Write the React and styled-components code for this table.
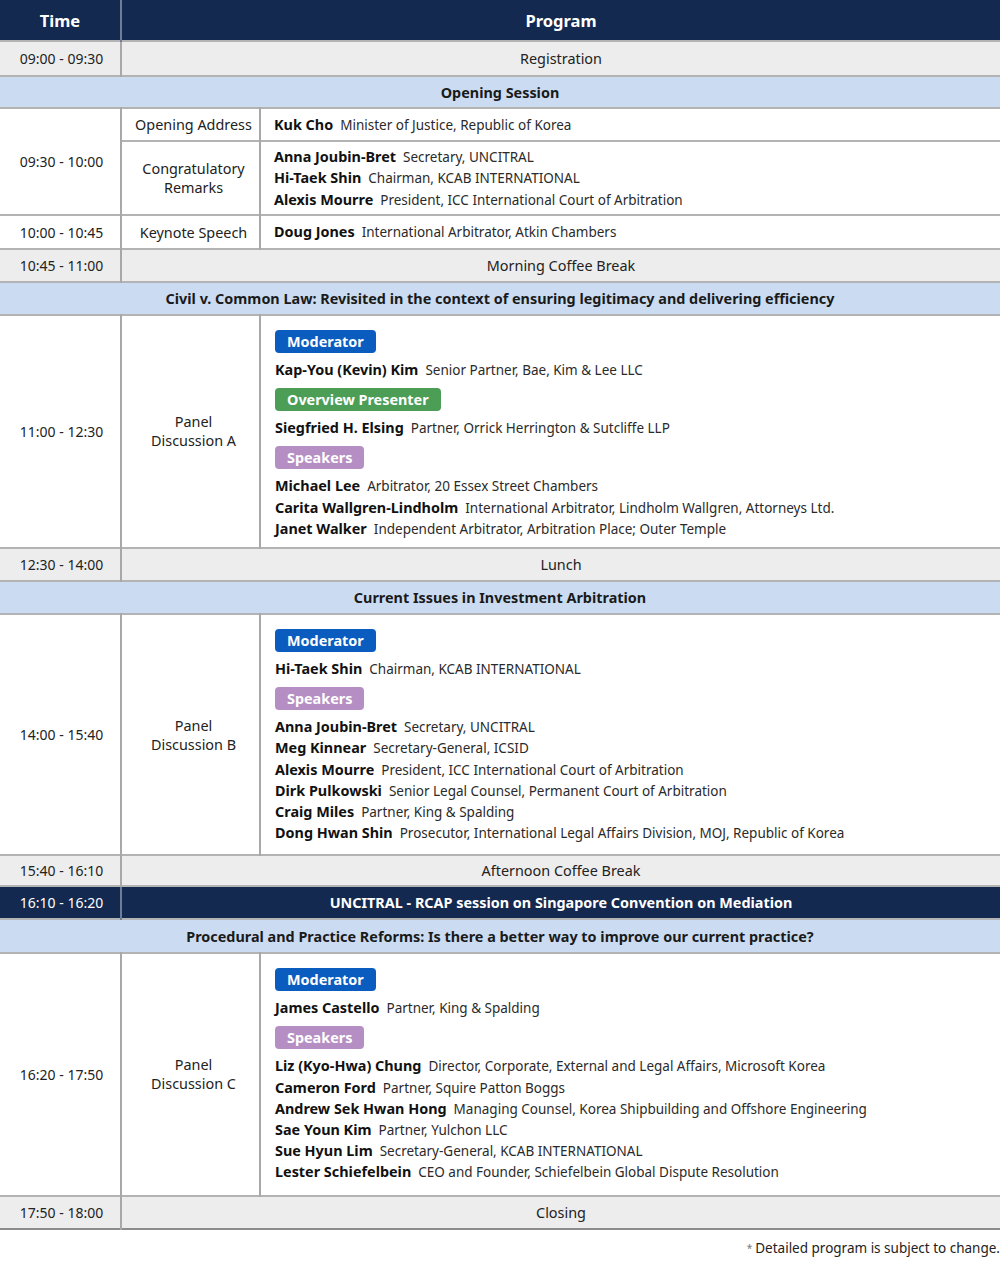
import React from 'react';
import styled, { createGlobalStyle } from 'styled-components';

const GlobalStyle = createGlobalStyle`
  body {
    margin: 0;
    background: #ffffff;
    font-family: "Noto Sans", "Open Sans", sans-serif;
    color: #222;
  }
`;

const Page = styled.div`
  width: 1000px;
`;

const Table = styled.table`
  width: 1000px;
  border-collapse: collapse;
  table-layout: fixed;
  font-size: 14.4px;
  line-height: 19px;
  border-bottom: 2px solid #8c8c8c;
`;

const HeadCell = styled.th`
  height: 40px;
  padding: 0;
  background: #13294f;
  color: #fff;
  font-size: 16.5px;
  font-weight: 700;
  text-align: center;
  border-left: ${p => (p.$first ? 'none' : '2px solid #6f7d96')};
`;

const Row = styled.tr`
  height: ${p => p.$h}px;
  border-top: 2px solid #b3b3b3;
`;

const TimeCell = styled.td`
  padding: 0 0 0 3px;
  font-size: 14px;
  text-align: center;
  vertical-align: middle;
  background: ${p => (p.$dark ? '#13294f' : p.$grey ? '#ededed' : '#fff')};
  color: ${p => (p.$dark ? '#fff' : '#222')};
`;

const RoleCell = styled.td`
  padding: 0 2px 0 8px;
  text-align: center;
  vertical-align: middle;
  line-height: 19px;
  border-left: 2px solid #a8a8a8;
`;

const SimpleCell = styled.td`
  padding: 0;
  text-align: center;
  vertical-align: middle;
  border-left: 2px solid ${p => (p.$dark ? '#6f7d96' : '#a8a8a8')};
  background: ${p => (p.$dark ? '#13294f' : '#ededed')};
  color: ${p => (p.$dark ? '#fff' : '#222')};
  font-weight: ${p => (p.$dark ? 700 : 400)};
`;

const SessionCell = styled.td`
  padding: 0;
  text-align: center;
  vertical-align: middle;
  background: #cbdcf2;
  font-weight: 700;
  color: #1a1a1a;
`;

const ContentCell = styled.td`
  padding: ${p => (p.$pb != null ? `14px 14px ${p.$pb}px 14px` : '3px 12px 3px 13px')};
  vertical-align: middle;
  border-left: 2px solid #a8a8a8;
`;

const Person = styled.div`
  height: 21.2px;
  line-height: 21.2px;
  white-space: nowrap;
`;

const Name = styled.b`
  font-weight: 700;
  line-height: 1;
  color: #111;
  margin-right: 7px;
`;

const Title = styled.span`
  font-size: 13.5px;
  line-height: 1;
  color: #2a2a2a;
`;

const Group = styled.div`
  & + & {
    margin-top: 8px;
  }
`;

const badgeColors = {
  Moderator: '#0a5cbf',
  'Overview Presenter': '#4c9e57',
  Speakers: '#b58fc3',
};

const Badge = styled.div`
  display: inline-block;
  height: 23px;
  line-height: 23px;
  padding: 0 12px;
  border-radius: 4px;
  background: ${p => p.$color};
  color: #fff;
  font-weight: 700;
  font-size: 14.4px;
  margin-bottom: 6px;
`;

const Note = styled.div`
  text-align: right;
  font-size: 13.5px;
  margin-top: 9px;
  color: #222;
`;

const Star = styled.span`
  color: #777;
  font-size: 10px;
  margin-right: 3px;
  vertical-align: 1px;
`;

const People = ({ list }) =>
  list.map(([n, t]) => (
    <Person key={n}>
      <Name>{n}</Name>
      <Title>{t}</Title>
    </Person>
  ));

const Panel = ({ groups }) =>
  groups.map(([label, list]) => (
    <Group key={label}>
      <Badge $color={badgeColors[label]}>{label}</Badge>
      <People list={list} />
    </Group>
  ));

const panelA = [
  ['Moderator', [['Kap-You (Kevin) Kim', 'Senior Partner, Bae, Kim & Lee LLC']]],
  ['Overview Presenter', [['Siegfried H. Elsing', 'Partner, Orrick Herrington & Sutcliffe LLP']]],
  ['Speakers', [
    ['Michael Lee', 'Arbitrator, 20 Essex Street Chambers'],
    ['Carita Wallgren-Lindholm', 'International Arbitrator, Lindholm Wallgren, Attorneys Ltd.'],
    ['Janet Walker', 'Independent Arbitrator, Arbitration Place; Outer Temple'],
  ]],
];

const panelB = [
  ['Moderator', [['Hi-Taek Shin', 'Chairman, KCAB INTERNATIONAL']]],
  ['Speakers', [
    ['Anna Joubin-Bret', 'Secretary, UNCITRAL'],
    ['Meg Kinnear', 'Secretary-General, ICSID'],
    ['Alexis Mourre', 'President, ICC International Court of Arbitration'],
    ['Dirk Pulkowski', 'Senior Legal Counsel, Permanent Court of Arbitration'],
    ['Craig Miles', 'Partner, King & Spalding'],
    ['Dong Hwan Shin', 'Prosecutor, International Legal Affairs Division, MOJ, Republic of Korea'],
  ]],
];

const panelC = [
  ['Moderator', [['James Castello', 'Partner, King & Spalding']]],
  ['Speakers', [
    ['Liz (Kyo-Hwa) Chung', 'Director, Corporate, External and Legal Affairs, Microsoft Korea'],
    ['Cameron Ford', 'Partner, Squire Patton Boggs'],
    ['Andrew Sek Hwan Hong', 'Managing Counsel, Korea Shipbuilding and Offshore Engineering'],
    ['Sae Youn Kim', 'Partner, Yulchon LLC'],
    ['Sue Hyun Lim', 'Secretary-General, KCAB INTERNATIONAL'],
    ['Lester Schiefelbein', 'CEO and Founder, Schiefelbein Global Dispute Resolution'],
  ]],
];

const Simple = ({ time, text, h = 33, dark }) => (
  <Row $h={h}>
    <TimeCell $grey={!dark} $dark={dark}>{time}</TimeCell>
    <SimpleCell colSpan={2} $dark={dark}>{text}</SimpleCell>
  </Row>
);

const Session = ({ text, h = 33 }) => (
  <Row $h={h}>
    <SessionCell colSpan={3}>{text}</SessionCell>
  </Row>
);

const PanelRow = ({ time, role, groups, pb }) => (
  <Row>
    <TimeCell>{time}</TimeCell>
    <RoleCell>{role}</RoleCell>
    <ContentCell $pb={pb}>
      <Panel groups={groups} />
    </ContentCell>
  </Row>
);

export default function App() {
  return (
    <Page>
      <GlobalStyle />
      <Table>
        <colgroup>
          <col style={{ width: 121 }} />
          <col style={{ width: 139 }} />
          <col />
        </colgroup>
        <thead>
          <tr>
            <HeadCell $first>Time</HeadCell>
            <HeadCell colSpan={2}>Program</HeadCell>
          </tr>
        </thead>
        <tbody>
          <Simple time="09:00 - 09:30" text="Registration" h={35} />
          <Session text="Opening Session" h={32} />
          <Row $h={33}>
            <TimeCell rowSpan={2}>09:30 - 10:00</TimeCell>
            <RoleCell>Opening Address</RoleCell>
            <ContentCell>
              <People list={[['Kuk Cho', 'Minister of Justice, Republic of Korea']]} />
            </ContentCell>
          </Row>
          <Row $h={74}>
            <RoleCell>Congratulatory<br />Remarks</RoleCell>
            <ContentCell>
              <People
                list={[
                  ['Anna Joubin-Bret', 'Secretary, UNCITRAL'],
                  ['Hi-Taek Shin', 'Chairman, KCAB INTERNATIONAL'],
                  ['Alexis Mourre', 'President, ICC International Court of Arbitration'],
                ]}
              />
            </ContentCell>
          </Row>
          <Row $h={34}>
            <TimeCell>10:00 - 10:45</TimeCell>
            <RoleCell>Keynote Speech</RoleCell>
            <ContentCell>
              <People list={[['Doug Jones', 'International Arbitrator, Atkin Chambers']]} />
            </ContentCell>
          </Row>
          <Simple time="10:45 - 11:00" text="Morning Coffee Break" />
          <Session text="Civil v. Common Law: Revisited in the context of ensuring legitimacy and delivering efficiency" />
          <PanelRow time="11:00 - 12:30" role={<>Panel<br />Discussion A</>} groups={panelA} pb={8} />
          <Simple time="12:30 - 14:00" text="Lunch" />
          <Session text="Current Issues in Investment Arbitration" />
          <PanelRow time="14:00 - 15:40" role={<>Panel<br />Discussion B</>} groups={panelB} pb={11} />
          <Simple time="15:40 - 16:10" text="Afternoon Coffee Break" h={31} />
          <Simple time="16:10 - 16:20" text="UNCITRAL - RCAP session on Singapore Convention on Mediation" dark />
          <Session text="Procedural and Practice Reforms: Is there a better way to improve our current practice?" h={34} />
          <PanelRow time="16:20 - 17:50" role={<>Panel<br />Discussion C</>} groups={panelC} pb={12} />
          <Simple time="17:50 - 18:00" text="Closing" />
        </tbody>
      </Table>
      <Note>
        <Star>*</Star>Detailed program is subject to change.
      </Note>
    </Page>
  );
}
